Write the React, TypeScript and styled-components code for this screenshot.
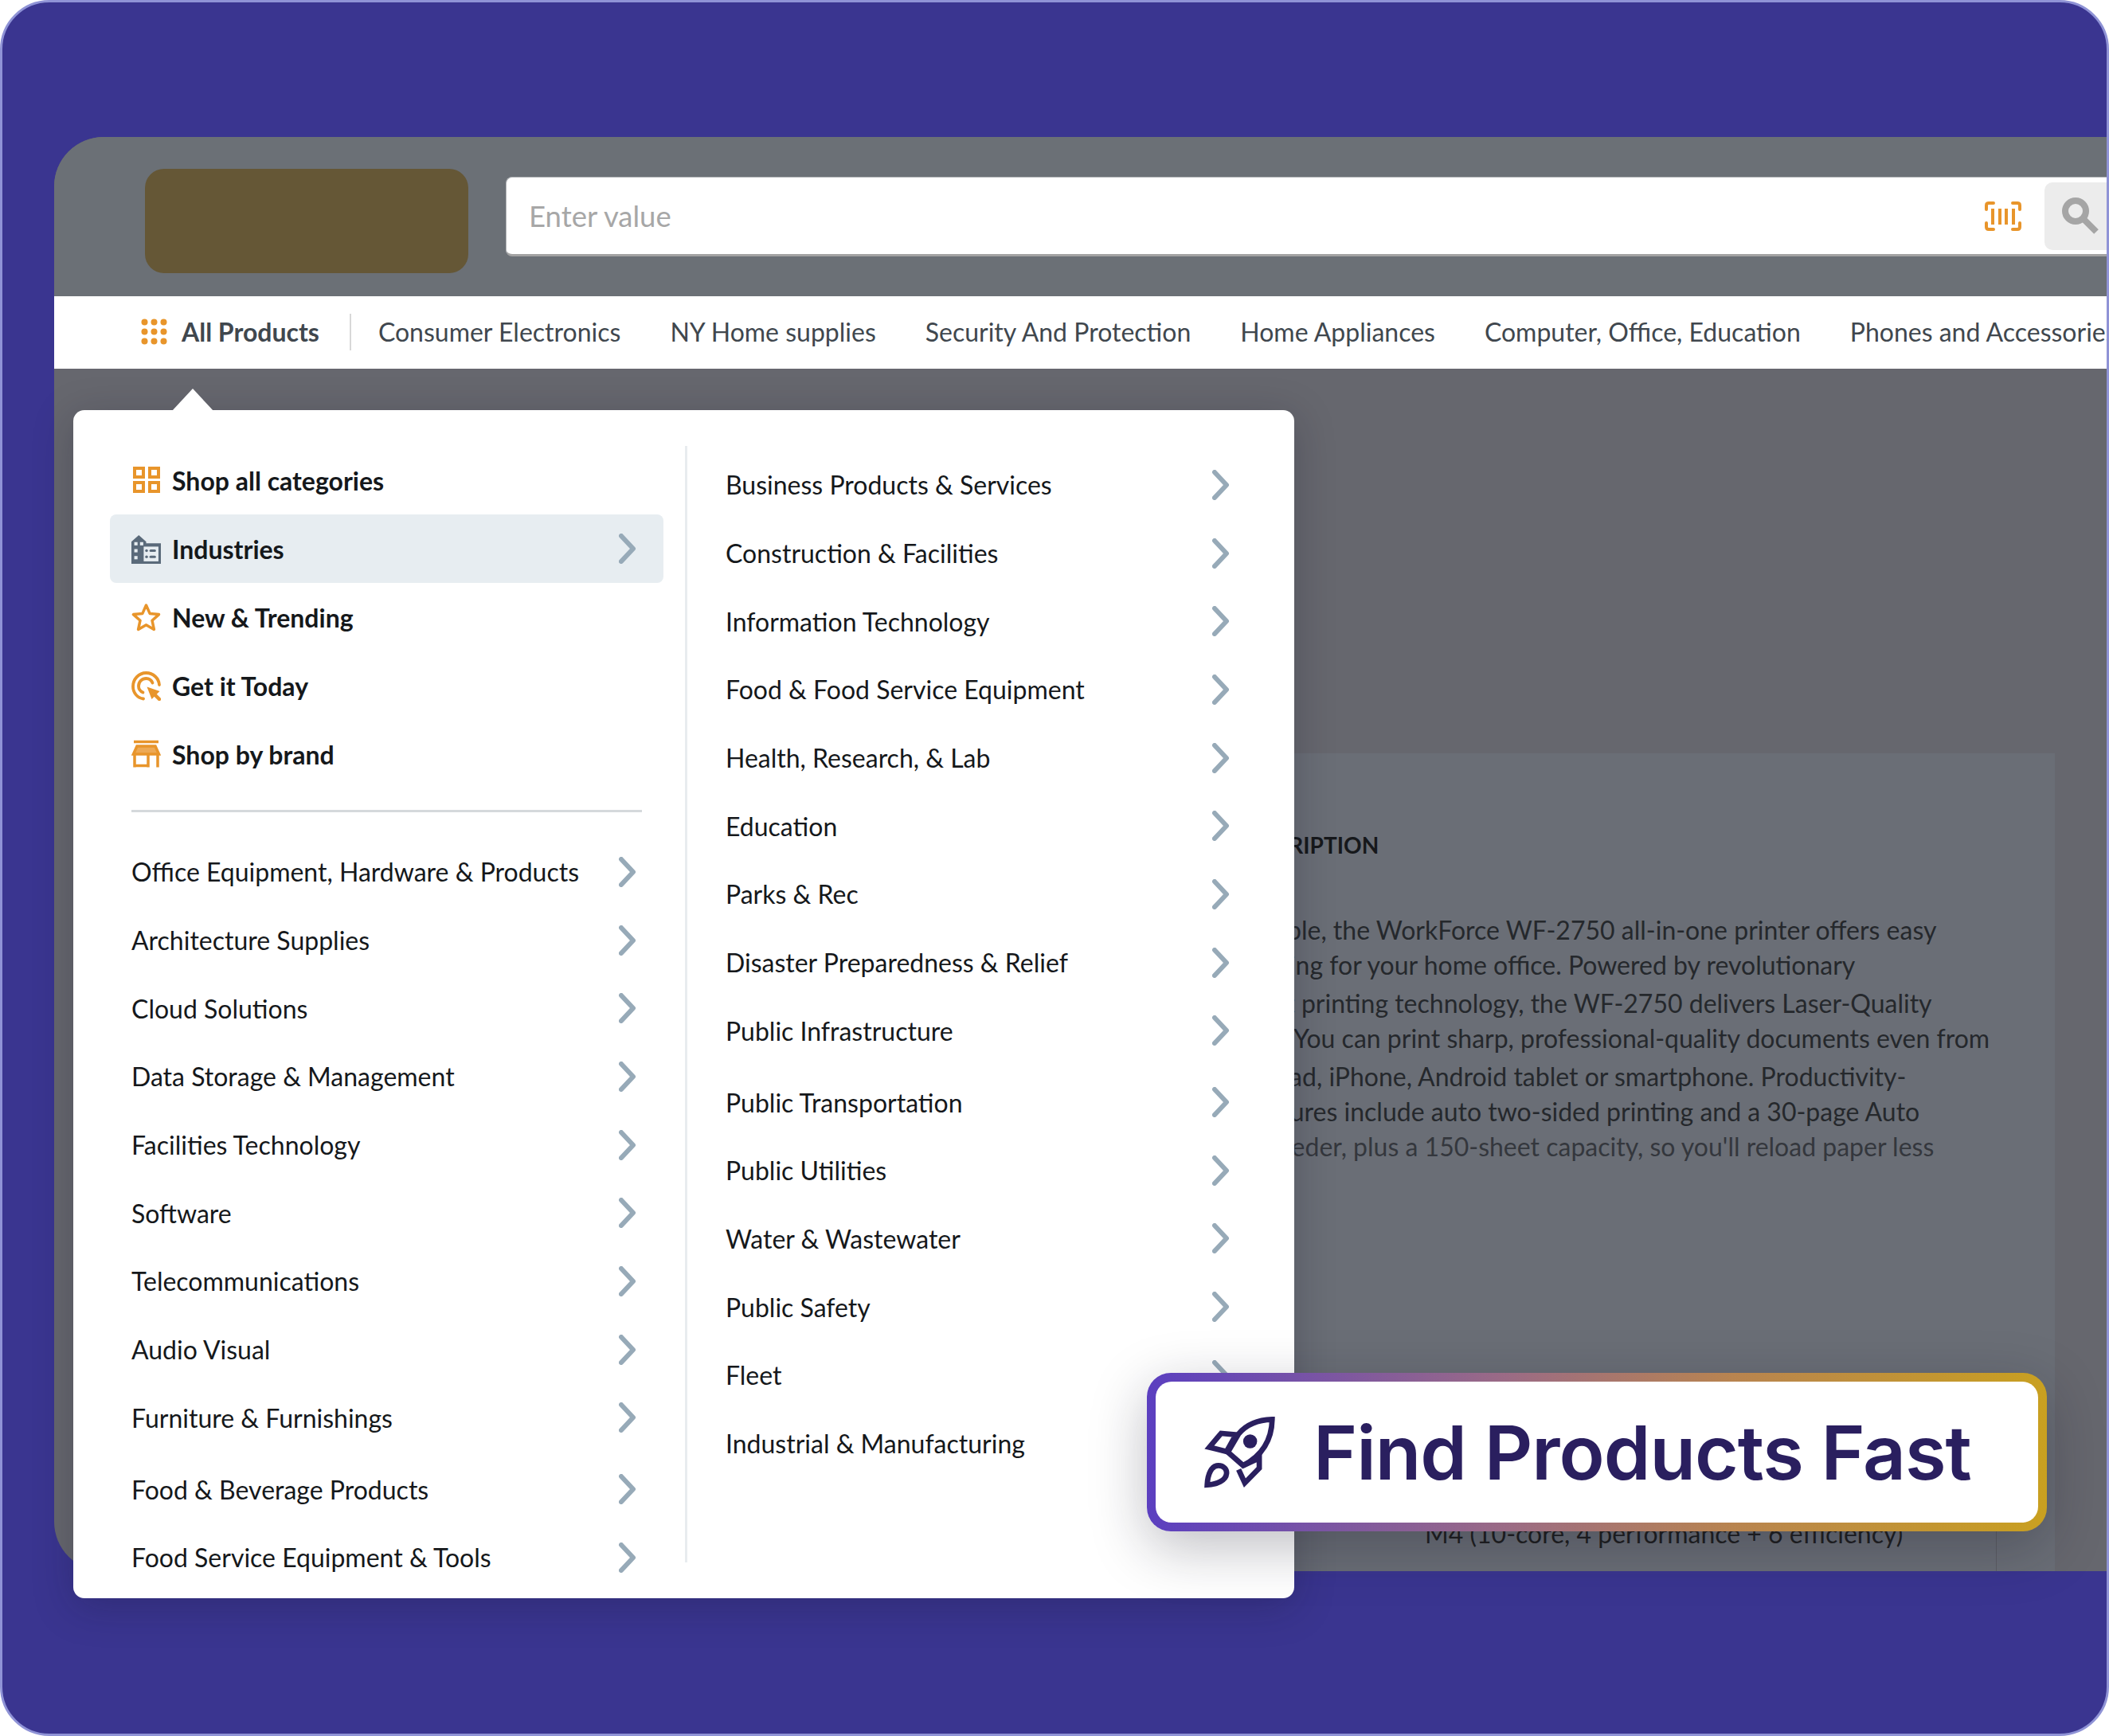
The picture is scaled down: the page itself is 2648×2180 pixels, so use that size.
import { createGlobalStyle, styled } from "styled-components";

const GlobalStyle = createGlobalStyle`
  html, body { margin: 0; padding: 0; background: #fff; }
  body { font-family: Lato, "Open Sans", sans-serif; }
`;

const topLinks = [
  { label: "Shop all categories", icon: "grid" },
  { label: "Industries", icon: "building", active: true },
  { label: "New & Trending", icon: "star" },
  { label: "Get it Today", icon: "target" },
  { label: "Shop by brand", icon: "store" },
];

const leftItems = [
  "Office Equipment, Hardware & Products",
  "Architecture Supplies",
  "Cloud Solutions",
  "Data Storage & Management",
  "Facilities Technology",
  "Software",
  "Telecommunications",
  "Audio Visual",
  "Furniture & Furnishings",
  "Food & Beverage Products",
  "Food Service Equipment & Tools",
];

const rightItems = [
  "Business Products & Services",
  "Construction & Facilities",
  "Information Technology",
  "Food & Food Service Equipment",
  "Health, Research, & Lab",
  "Education",
  "Parks & Rec",
  "Disaster Preparedness & Relief",
  "Public Infrastructure",
  "Public Transportation",
  "Public Utilities",
  "Water & Wastewater",
  "Public Safety",
  "Fleet",
  "Industrial & Manufacturing",
];

const navItems = [
  "Consumer Electronics",
  "NY Home supplies",
  "Security And Protection",
  "Home Appliances",
  "Computer, Office, Education",
  "Phones and Accessories",
];

// the start of each line sits under the menu popup
const descriptionLines = [
  { text: "Reliable, the WorkForce WF-2750 all-in-one printer offers easy", indent: 1 },
  { text: "printing for your home office. Powered by revolutionary", indent: 4 },
  { text: "inkjet printing technology, the WF-2750 delivers Laser-Quality", indent: 0, wide: true },
  { text: "text. You can print sharp, professional-quality documents even from", indent: 6 },
  { text: "an iPad, iPhone, Android tablet or smartphone. Productivity-", indent: 3, wide: true },
  { text: "features include auto two-sided printing and a 30-page Auto", indent: 17 },
  { text: "Feeder, plus a 150-sheet capacity, so you'll reload paper less", indent: 40, fade: true },
];

function TopIcon({ name }: { name: string }) {
  if (name === "grid") {
    return (
      <svg width="37" height="37" viewBox="0 0 37 37" fill="none" stroke="#e8952b" strokeWidth="4">
        <rect x="4" y="3" width="11" height="11" />
        <rect x="23" y="3" width="11" height="11" />
        <rect x="4" y="21" width="11" height="11" />
        <rect x="23" y="21" width="11" height="11" />
      </svg>
    );
  }
  if (name === "building") {
    return (
      <svg width="37" height="37" viewBox="0 0 36 36">
        <path d="M0 36V9l9-8 9 8v2h18v25z" fill="#5a6a7a" />
        <rect x="15" y="15" width="18" height="18" fill="#e7edf1" />
        <g fill="#e7edf1">
          <rect x="3.5" y="9.5" width="4" height="4" />
          <rect x="10.5" y="9.5" width="4" height="4" />
          <rect x="3.5" y="18" width="4" height="4" />
          <rect x="3.5" y="26.5" width="4" height="4" />
        </g>
        <g fill="#5a6a7a">
          <circle cx="18.5" cy="20" r="1.7" />
          <circle cx="18.5" cy="27.5" r="1.7" />
          <rect x="22" y="18.5" width="8" height="3" rx="1.5" />
          <rect x="22" y="26" width="8" height="3" rx="1.5" />
        </g>
      </svg>
    );
  }
  if (name === "star") {
    return (
      <svg width="37" height="37" viewBox="0 0 37 37" fill="none" stroke="#e8952b" strokeWidth="3.5" strokeLinejoin="round">
        <path d="M18.5 3l4.6 10.4 11.4 1.2-8.5 7.6 2.4 11.2-9.9-5.7-9.9 5.7 2.4-11.2-8.5-7.6 11.4-1.2z" />
      </svg>
    );
  }
  if (name === "target") {
    return (
      <svg width="37" height="37" viewBox="0 0 37 37" fill="none" stroke="#e8952b" strokeWidth="3.8" strokeLinecap="round">
        <path d="M15 34.5C7.5 33.5 2 27 2 19 2 10 9 2 18.5 2 27.5 2 34.5 9 35 17" />
        <path d="M14.5 26.5C11 25 9 22 9 18.5 9 13 13.5 9 18.5 9 22 9 25 11 26.5 14.5" />
        <path d="M19.5 19.5l16 5.5-10 10z" fill="#e8952b" stroke="none" />
        <path d="M27 27l8 8" strokeWidth="4.5" />
      </svg>
    );
  }
  return (
    <svg width="37" height="37" viewBox="0 0 37 37" fill="none" stroke="#e8952b" strokeWidth="3.5">
      <path d="M3 2.5h31" />
      <path d="M7 8h23l4.5 10H2.5z" fill="#eda955" />
      <path d="M4 18v16.5M33 18v16.5M21 18v16.5M5 32.5h16" />
    </svg>
  );
}

function Chevron() {
  return (
    <ChevronIcon viewBox="0 0 22 38" fill="none" stroke="#97aab8" strokeWidth="6" strokeLinecap="round" strokeLinejoin="round">
      <path d="M3 3l15 16L3 35" />
    </ChevronIcon>
  );
}

function DotsIcon() {
  const dots = [4.5, 16.5, 28.5];
  return (
    <DotsSvg viewBox="0 0 33 33" fill="#e8952b">
      {dots.map((y) =>
        dots.map((x) => <circle key={`${x}-${y}`} cx={x} cy={y} r="4" />)
      )}
    </DotsSvg>
  );
}

function BarcodeIcon() {
  return (
    <svg width="46" height="37" viewBox="0 0 46 37" fill="none" stroke="#e8952b" strokeWidth="4" strokeLinecap="round">
      <path d="M11 2H5Q2 2 2 5v5M35 2h6q3 0 3 3v5M11 35H5q-3 0-3-3v-5M35 35h6q3 0 3-3v-5" />
      <path d="M10 9v20M19 9v20M27 9v20M36 9v20" strokeLinecap="butt" />
    </svg>
  );
}

function SearchIcon() {
  return (
    <svg width="46" height="46" viewBox="0 0 46 46" fill="none" stroke="#a5a5a5" strokeWidth="8">
      <circle cx="17" cy="17" r="13" />
      <path d="M28 28l15 15" strokeWidth="8" />
    </svg>
  );
}

function RocketIcon() {
  return (
    <RocketSvg viewBox="65 58 265 267" fill="none" stroke="#2a1f5f" strokeWidth="20" strokeLinejoin="miter">
      <path d="M320 68C262 70 220 92 195 122L155 190 212 240C260 215 318 165 320 68Z" />
      <path d="M86 172L130 120 185 125 150 188Z" />
      <path d="M212 240L272 212 272 250 218 305 195 255" />
      <path d="M78 312C80 270 95 240 120 240 140 240 152 255 150 270 148 295 115 310 78 312Z" />
      <circle cx="238" cy="150" r="26" fill="#2a1f5f" stroke="none" />
    </RocketSvg>
  );
}

export default function App() {
  return (
    <Screen>
      <GlobalStyle />
      <Frame>
        <Window>
          <Header>
            <LogoPlaceholder />
            <SearchBar>
              <SearchPlaceholder>Enter value</SearchPlaceholder>
              <BarcodeIcon />
              <SearchButton>
                <SearchIcon />
              </SearchButton>
            </SearchBar>
          </Header>
          <NavBar>
            <AllProducts>
              <DotsIcon />
              <span>All Products</span>
            </AllProducts>
            <NavDivider />
            <NavLinks>
              {navItems.map((item) => (
                <NavLink key={item}>{item}</NavLink>
              ))}
            </NavLinks>
          </NavBar>
          <PageBody>
            <DescriptionPanel>
              <DescriptionTitle>DESCRIPTION</DescriptionTitle>
              {descriptionLines.map((line) => (
                <DescriptionLine key={line.text} $wide={line.wide} $fade={line.fade} $indent={line.indent}>
                  {line.text}
                </DescriptionLine>
              ))}
              <SpecRow>M4 (10-core, 4 performance + 6 efficiency)</SpecRow>
            </DescriptionPanel>
          </PageBody>
        </Window>

        <MenuPopup>
          <MenuArrow />
          <LeftColumn>
            {topLinks.map((link) => (
              <TopLink key={link.label} $active={link.active}>
                <TopIcon name={link.icon} />
                <TopLabel>{link.label}</TopLabel>
                {link.active && <Chevron />}
              </TopLink>
            ))}
            <MenuDivider />
            {leftItems.map((item) => (
              <MenuRow key={item} $nudge={item === "Food & Beverage Products"}>
                <span>{item}</span>
                <Chevron />
              </MenuRow>
            ))}
          </LeftColumn>
          <RightColumn>
            {rightItems.map((item) => (
              <MenuRow key={item} $nudge={item === "Public Transportation"}>
                <span>{item}</span>
                {item !== "Industrial & Manufacturing" && <Chevron />}
              </MenuRow>
            ))}
          </RightColumn>
        </MenuPopup>

        <Callout>
          <CalloutInner>
            <RocketIcon />
            <CalloutText>Find Products Fast</CalloutText>
          </CalloutInner>
        </Callout>
      </Frame>
    </Screen>
  );
}

const Screen = styled.div`
  width: 2648px;
  height: 2180px;
  overflow: hidden;
`;

const Frame = styled.div`
  position: relative;
  box-sizing: border-box;
  width: 2648px;
  height: 2180px;
  padding: 169px 0 0 65px;
  overflow: hidden;
  background: #3a3590;
  border: 3px solid #8f93d6;
  border-radius: 62px;
`;

const Window = styled.div`
  display: flex;
  flex-direction: column;
  height: 1801px;
  overflow: hidden;
  background: #66676e;
  border-radius: 62px 0 0 62px;
`;

const Header = styled.div`
  display: flex;
  align-items: flex-start;
  flex-shrink: 0;
  height: 200px;
  box-sizing: border-box;
  padding: 40px 0 0 114px;
  background: #6b7076;
`;

const LogoPlaceholder = styled.div`
  width: 406px;
  height: 131px;
  background: #655736;
  border-radius: 24px;
`;

const SearchBar = styled.div`
  display: flex;
  align-items: center;
  flex: 1;
  height: 100px;
  box-sizing: border-box;
  margin: 10px 0 0 47px;
  padding: 0 0 0 28px;
  background: #fff;
  border: 1px solid #b3b5b8;
  border-bottom: 3px solid #a3a3a3;
  border-right: 0;
  border-radius: 8px 0 0 8px;
`;

const SearchPlaceholder = styled.div`
  flex: 1;
  color: #a7a7a7;
  font-size: 36.5px;
`;

const SearchButton = styled.div`
  display: flex;
  align-items: center;
  width: 78px;
  height: 85px;
  box-sizing: border-box;
  margin-left: 29px;
  padding-left: 22px;
  background: #ececec;
  border-radius: 10px 0 0 10px;
`;

const NavBar = styled.div`
  display: flex;
  align-items: center;
  flex-shrink: 0;
  height: 91px;
  box-sizing: border-box;
  padding: 0 0 2px 109px;
  overflow: hidden;
  background: #fff;
`;

const AllProducts = styled.div`
  display: flex;
  align-items: center;
  flex-shrink: 0;
  gap: 18px;
  color: #40474e;
  font-size: 32px;
  font-weight: 700;
  white-space: nowrap;
`;

const DotsSvg = styled.svg`
  width: 33px;
  height: 33px;
  flex-shrink: 0;
`;

const NavDivider = styled.div`
  width: 2px;
  height: 46px;
  flex-shrink: 0;
  margin: 0 34px 0 38px;
  background: #d8d8d8;
`;

const NavLinks = styled.div`
  display: flex;
  gap: 62px;
`;

const NavLink = styled.div`
  color: #40474e;
  font-size: 32px;
  white-space: nowrap;
`;

const PageBody = styled.div`
  flex: 1;
  min-height: 0;
  padding: 483px 65px 0 0;
`;

const DescriptionPanel = styled.div`
  height: 100%;
  margin-left: 1420px;
  padding: 0 0 0 41px;
  background: #6a6e76;
  color: #25282c;
`;

const DescriptionTitle = styled.div`
  padding: 92px 0 62px 18px;
  color: #16181b;
  font-size: 28px;
  font-weight: 700;
  line-height: 46px;
`;

const DescriptionLine = styled.div<{ $wide?: boolean; $fade?: boolean; $indent: number }>`
  margin-top: ${(p) => (p.$wide ? "4px" : "0")};
  margin-left: ${(p) => 19 + p.$indent}px;
  color: ${(p) => (p.$fade ? "#34373d" : "#25282c")};
  font-size: 32px;
  line-height: 44px;
  white-space: nowrap;
`;

const SpecRow = styled.div`
  width: 978px;
  height: 67px;
  box-sizing: border-box;
  margin-top: 444px;
  padding-left: 260px;
  color: #1e1e1e;
  font-size: 32px;
  border-right: 1px solid #5c5d63;
`;

const MenuPopup = styled.div`
  position: absolute;
  top: 512px;
  left: 89px;
  display: flex;
  width: 1533px;
  height: 1492px;
  box-sizing: border-box;
  padding: 45px 0 0 46px;
  background: #fff;
  border-radius: 14px;
  box-shadow: 0 10px 50px rgba(20, 20, 40, 0.25);
`;

const MenuArrow = styled.div`
  position: absolute;
  top: -27px;
  left: 124px;
  width: 0;
  height: 0;
  border-right: 26px solid transparent;
  border-bottom: 28px solid #fff;
  border-left: 26px solid transparent;
`;

const LeftColumn = styled.div`
  display: flex;
  flex-direction: column;
  width: 725px;
  height: 1402px;
  box-sizing: border-box;
  padding-right: 27px;
  border-right: 3px solid #e8ecef;
`;

const RightColumn = styled.div`
  display: flex;
  flex-direction: column;
  width: 694px;
  padding: 6px 0 0 21px;
`;

const TopLink = styled.div<{ $active?: boolean }>`
  display: flex;
  align-items: center;
  gap: 14px;
  height: 86px;
  flex-shrink: 0;
  box-sizing: border-box;
  padding: 0 34px 0 27px;
  background: ${(p) => (p.$active ? "#e7edf1" : "transparent")};
  border-radius: 8px;
`;

const TopLabel = styled.div`
  flex: 1;
  color: #15181b;
  font-size: 32px;
  font-weight: 700;
`;

const MenuDivider = styled.div`
  height: 3px;
  flex-shrink: 0;
  margin: 27px 27px 32px;
  background: #d5d9dc;
`;

const MenuRow = styled.div<{ $nudge?: boolean }>`
  display: flex;
  align-items: center;
  justify-content: space-between;
  height: 85.7px;
  flex-shrink: 0;
  box-sizing: border-box;
  margin-top: ${(p) => (p.$nudge ? "4px" : "0")};
  padding: 0 34px 0 27px;
  color: #15181b;
  font-size: 32px;
`;

const ChevronIcon = styled.svg`
  width: 22px;
  height: 38px;
  flex-shrink: 0;
`;

const Callout = styled.div`
  position: absolute;
  top: 1721px;
  left: 1437px;
  width: 1130px;
  height: 199px;
  box-sizing: border-box;
  padding: 11px;
  background: linear-gradient(90deg, #5b3fc0 0%, #9b6b85 40%, #b88450 65%, #c9a020 100%);
  border-radius: 30px;
  box-shadow: 0 20px 70px rgba(20, 20, 40, 0.28);
`;

const CalloutInner = styled.div`
  display: flex;
  align-items: center;
  gap: 48px;
  height: 100%;
  box-sizing: border-box;
  padding-left: 60px;
  background: #fff;
  border-radius: 20px;
`;

const RocketSvg = styled.svg`
  width: 90px;
  height: 90px;
  flex-shrink: 0;
`;

const CalloutText = styled.div`
  color: #2a1f5f;
  font-family: Inter, sans-serif;
  font-size: 94px;
  font-weight: 600;
  letter-spacing: -1px;
  white-space: nowrap;
`;
